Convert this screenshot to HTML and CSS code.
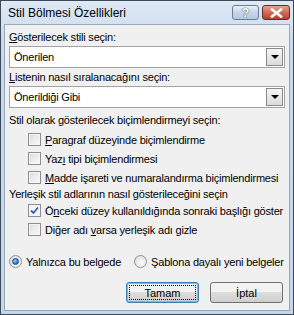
FILE: index.html
```html
<!DOCTYPE html>
<html lang="tr">
<head>
    <meta charset="UTF-8">
    <title>Stil Bölmesi Özellikleri</title>
    <link rel="stylesheet" href="styles.css">
</head>
<body>
    <div class="window">
        <div class="titlebar">
            <span class="title">Stil Bölmesi Özellikleri</span>
            <div class="caption-btns">
                <button class="cap-btn help">?</button>
                <button class="cap-btn close">
                    <svg width="13" height="10" viewBox="0 0 13 10"><path d="M2 1.5 L11 8.5 M11 1.5 L2 8.5" stroke="#fff" stroke-width="2.6" stroke-linecap="square"/></svg>
                </button>
            </div>
        </div>

        <div class="client">
            <div class="label first"><u>G</u>österilecek stili seçin:</div>
            <div class="combo">
                <span class="combo-text">Önerilen</span>
                <span class="combo-btn"><span class="arrow"></span></span>
            </div>

            <div class="label l2"><u>L</u>istenin nasıl sıralanacağını seçin:</div>
            <div class="combo">
                <span class="combo-text">Önerildiği Gibi</span>
                <span class="combo-btn"><span class="arrow"></span></span>
            </div>

            <div class="label l3">Stil olarak gösterilecek biçimlendirmeyi seçin:</div>
            <div class="checks">
                <div class="check-row"><span class="box"></span><span class="txt"><u>P</u>aragraf düzeyinde biçimlendirme</span></div>
                <div class="check-row"><span class="box"></span><span class="txt">Yaz<u>ı</u> tipi biçimlendirmesi</span></div>
                <div class="check-row"><span class="box"></span><span class="txt"><u>M</u>adde işareti ve numaralandırma biçimlendirmesi</span></div>
            </div>

            <div class="label l4">Yerleşik stil adlarının nasıl gösterileceğini seçin</div>
            <div class="check-row"><span class="box checked">
                <svg width="9" height="9" viewBox="0 0 9 9"><path d="M1 4.5 L3.5 7 L8 1.5" fill="none" stroke="#2a62b8" stroke-width="1.8"/></svg>
            </span><span class="txt">Ö<u>n</u>ceki düzey kullanıldığında sonraki başlığı göster</span></div>
            <div class="check-row"><span class="box"></span><span class="txt">Diğer adı <u>v</u>arsa yerleşik adı gizle</span></div>

            <div class="radio-row">
                <div class="radio-item"><span class="radio on"></span><span class="txt">Yalnızca bu belgede</span></div>
                <div class="radio-item second"><span class="radio"></span><span class="txt">Şablona dayalı yeni belgeler</span></div>
            </div>

            <div class="buttons">
                <button class="btn default"><span class="focus">Tamam</span></button>
                <button class="btn">İptal</button>
            </div>
        </div>
    </div>
</body>
</html>
```

FILE: styles.css
```css
body {
    margin: 0;
    font-family: "Liberation Sans", Arial, sans-serif;
    font-size: 11px;
    letter-spacing: -0.2px;
    color: #000;
}

.window {
    width: 294px;
    height: 315px;
    box-sizing: border-box;
    border: 1px solid #3d4a5a;
    background: linear-gradient(#dfe9f5, #c9daee 40px, #c4d6ec);
    display: flex;
    flex-direction: column;
}

.titlebar {
    height: 23px;
    display: flex;
    align-items: center;
    justify-content: space-between;
    padding: 0 3px 0 7px;
}

.title {
    font-size: 12px;
    letter-spacing: 0;
    padding-top: 1px;
}

.caption-btns {
    display: flex;
    gap: 3px;
    align-self: flex-start;
    margin-top: 4px;
}

.cap-btn {
    height: 15px;
    border-radius: 3px;
    padding: 0;
    display: flex;
    align-items: center;
    justify-content: center;
    font-family: "Liberation Sans", Arial, sans-serif;
}

.help {
    width: 27px;
    border: 1px solid #6d7d92;
    background: linear-gradient(#e8f0f9, #c6d6ea 50%, #b4c8e2);
    color: #fff;
    font-weight: bold;
    font-size: 13px;
    text-shadow: 0 0 1px #3b4a5d, 0 0 1px #3b4a5d;
}

.close {
    width: 28px;
    border: 1px solid #6e2b25;
    background: linear-gradient(#e4a395, #cf6a56 50%, #b8412c);
}

.client {
    flex: 1;
    margin: 0 3px 3px 3px;
    border: 1px solid #98a9be;
    background: #f0f0f0;
    padding: 0 4px;
}

.label {
    height: 13px;
    line-height: 13px;
    white-space: nowrap;
}

.first {
    margin-top: 6px;
}

.l2 {
    margin-top: 3px;
}

.l3 {
    margin-top: 6px;
}

.l4 {
    margin-top: 1px;
}

.combo {
    margin-top: 2px;
    height: 22px;
    box-sizing: border-box;
    border: 1px solid #a3a3a3;
    background: #fff;
    display: flex;
    align-items: center;
    justify-content: space-between;
}

.combo-text {
    padding-left: 4px;
}

.combo-btn {
    width: 17px;
    height: 18px;
    margin-right: 1px;
    box-sizing: border-box;
    border: 1px solid #8a8a8a;
    background: linear-gradient(#f5f5f5, #dcdcdc);
    display: flex;
    align-items: center;
    justify-content: center;
}

.arrow {
    width: 0;
    height: 0;
    border-left: 4px solid transparent;
    border-right: 4px solid transparent;
    border-top: 4px solid #000;
}

.checks {
    margin-top: 3px;
}

.check-row {
    height: 19px;
    display: flex;
    align-items: center;
    padding-left: 19px;
}

.txt {
    white-space: nowrap;
}

.box {
    flex: none;
    width: 13px;
    height: 13px;
    box-sizing: border-box;
    border: 1px solid #8f8f8f;
    background: linear-gradient(135deg, #dcdcdc, #fbfbfb);
    box-shadow: inset 0 0 0 1px #f4f4f4;
    margin-right: 4px;
    display: flex;
    align-items: center;
    justify-content: center;
}

.checked {
    background: #f4f4f4;
}

.radio-row {
    margin-top: 13px;
    height: 19px;
    display: flex;
    align-items: center;
}

.radio-item {
    display: flex;
    align-items: center;
}

.radio-item.second {
    margin-left: 13px;
}

.radio {
    flex: none;
    width: 13px;
    height: 13px;
    box-sizing: border-box;
    border-radius: 50%;
    border: 1px solid #8f8f8f;
    background: radial-gradient(circle at 60% 60%, #fcfcfc, #d8d8d8);
    margin-right: 4px;
    display: flex;
    align-items: center;
    justify-content: center;
}

.radio.on::after {
    content: "";
    width: 5px;
    height: 5px;
    border-radius: 50%;
    background: radial-gradient(circle at 40% 35%, #8fd0ff, #1f6fc4 70%);
    border: 1px solid #1a4d86;
}

.buttons {
    margin-top: 11px;
    display: flex;
    justify-content: flex-end;
    gap: 11px;
    padding-right: 2px;
}

.btn {
    width: 73px;
    height: 21px;
    box-sizing: border-box;
    border: 1px solid #707070;
    border-radius: 3px;
    background: linear-gradient(#f2f2f2 45%, #dddddd 50%, #cfcfcf);
    font-family: "Liberation Sans", Arial, sans-serif;
    font-size: 11px;
    padding: 0;
    display: flex;
    align-items: center;
    justify-content: center;
}

.btn.default {
    border-color: #3c7fb1;
    box-shadow: inset 0 0 0 1px #48d0f0;
    padding: 2px;
}

.focus {
    flex: 1;
    align-self: stretch;
    display: flex;
    align-items: center;
    justify-content: center;
    border: 1px dotted #000;
}
```
